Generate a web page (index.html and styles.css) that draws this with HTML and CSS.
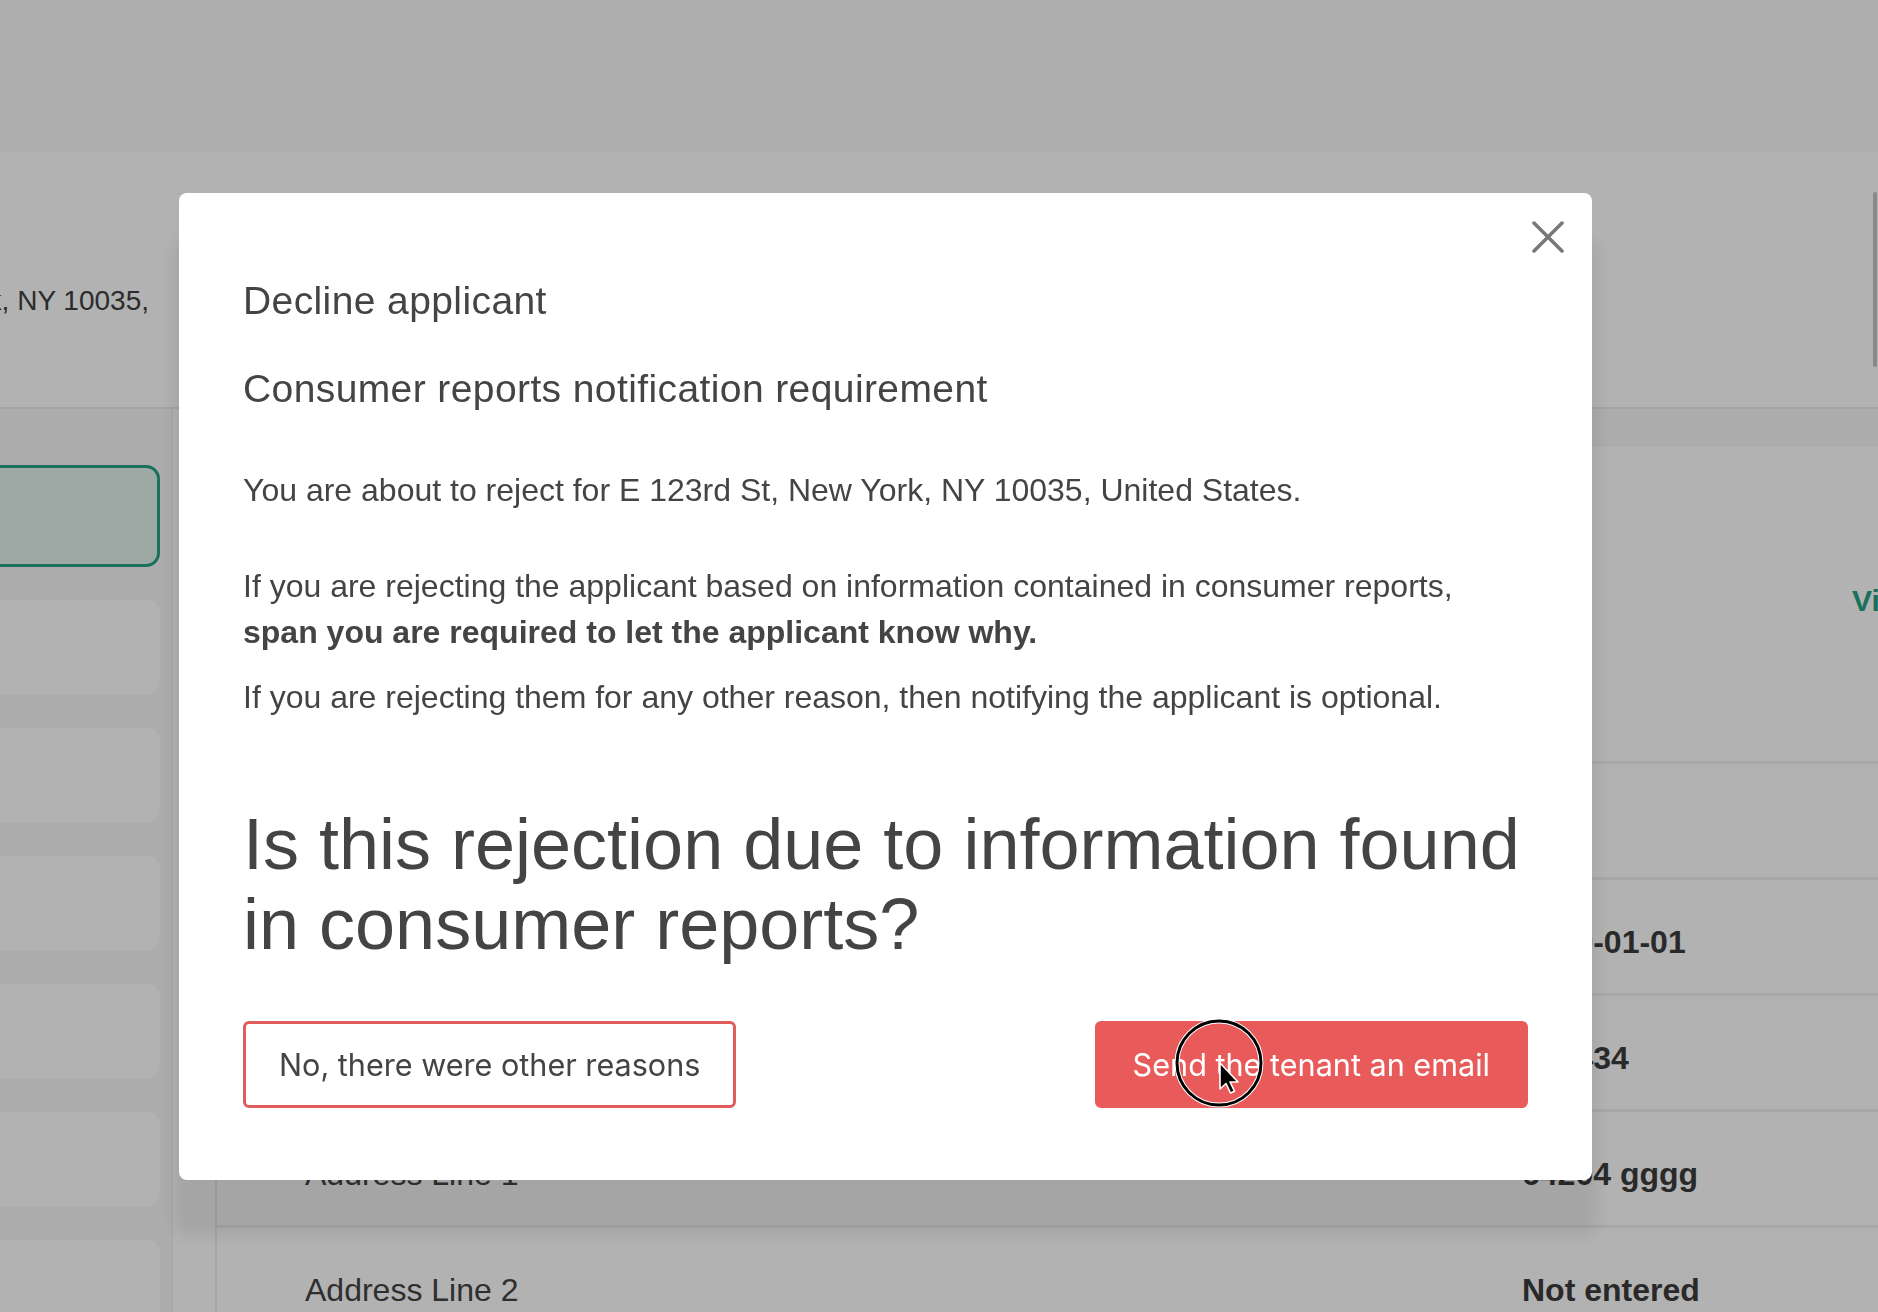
FILE: index.html
```html
<!DOCTYPE html>
<html lang="en">
<head>
    <meta charset="UTF-8">
    <meta name="viewport" content="width=device-width, initial-scale=1.0">
    <title>Decline applicant</title>
    <link rel="stylesheet" href="styles.css">
</head>
<body>
    <div class="topbar"></div>

    <div class="property-header">
        <div class="property-address">
            <span>E 123rd St, New York, NY 10035,</span>
        </div>
        <div class="header-scroll"></div>
    </div>

    <div class="page-body">
        <div class="applicant-list">
            <div class="applicant-card selected"></div>
            <div class="applicant-card"></div>
            <div class="applicant-card"></div>
            <div class="applicant-card"></div>
            <div class="applicant-card"></div>
            <div class="applicant-card"></div>
            <div class="applicant-card"></div>
        </div>

        <div class="applicant-details">
            <div class="details-header"></div>
            <div class="details-photo">
                <span></span>
                <a class="view-link" href="#">View documents</a>
            </div>
            <div class="details-row">
                <span class="row-label">First name</span>
                <span class="row-value">Ann</span>
            </div>
            <div class="details-row">
                <span class="row-label">Date of birth</span>
                <span class="row-value">1990-01-01</span>
            </div>
            <div class="details-row">
                <span class="row-label">Phone</span>
                <span class="row-value">123434</span>
            </div>
            <div class="details-row">
                <span class="row-label">Address Line 1</span>
                <span class="row-value">64204 gggg</span>
            </div>
            <div class="details-row">
                <span class="row-label">Address Line 2</span>
                <span class="row-value">Not entered</span>
            </div>
        </div>
    </div>

    <!-- Decline applicant modal -->
    <div class="modal-backdrop">
        <div class="modal">
            <button class="modal-close" aria-label="Close">
                <svg width="32" height="32" viewBox="0 0 32 32">
                    <path d="M2 2 L30 30 M30 2 L2 30" stroke="#777" stroke-width="3.5" stroke-linecap="round" fill="none"/>
                </svg>
            </button>

            <h2 class="modal-title">Decline applicant</h2>
            <h3 class="modal-subtitle">Consumer reports notification requirement</h3>

            <p class="intro">You are about to reject for E 123rd St, New York, NY 10035, United States.</p>
            <p class="notice">If you are rejecting the applicant based on information contained in consumer reports,<br><strong>span you are required to let the applicant know why.</strong></p>
            <p>If you are rejecting them for any other reason, then notifying the applicant is optional.</p>

            <h1 class="question">Is this rejection due to information found in consumer reports?</h1>

            <div class="modal-actions">
                <button class="btn btn-outline">No, there were other reasons</button>
                <button class="btn btn-danger">Send the tenant an email</button>
            </div>
        </div>

        <!-- click highlight from the screen recorder -->
        <svg class="click-marker" width="90" height="90" viewBox="0 0 90 90">
            <circle cx="44" cy="44" r="42" fill="none" stroke="#fff" stroke-width="5"/>
            <circle cx="44" cy="44" r="42" fill="none" stroke="#000" stroke-width="3"/>
            <path d="M45 44 L45 70 L51 64.5 L55.5 74 L59.5 72.2 L55 63 L63 63 Z" fill="#000" stroke="#fff" stroke-width="1.6" stroke-linejoin="round"/>
        </svg>
    </div>
</body>
</html>
```

FILE: styles.css
```css
* {
    box-sizing: border-box;
}

body {
    margin: 0;
    height: 1312px;
    overflow: hidden;
    font-family: "Liberation Sans", Arial, sans-serif;
    color: #444;
    background-color: #fff;
}

/* Page behind the modal */
.topbar {
    height: 152px;
    background-color: #f9f9f9;
}

.property-header {
    position: relative;
    height: 257px;
    border-bottom: 2px solid #ececec;
}

.property-address {
    display: flex;
    justify-content: flex-end;
    width: 172px;
    padding: 132px 23px 0 0;
    overflow: hidden;
    white-space: nowrap;
    font-size: 28px;
    line-height: 34px;
    color: #404040;
}

.header-scroll {
    position: absolute;
    top: 40px;
    right: 1px;
    width: 4px;
    height: 175px;
    border-radius: 2px;
    background-color: #c4c4c4;
}

.page-body {
    display: flex;
}

.applicant-list {
    width: 173px;
    height: 903px;
    padding: 56px 12px 0 0;
    display: flex;
    flex-direction: column;
    gap: 33px;
    background-color: #f6f6f6;
    border-right: 1px solid #ededed;
}

.applicant-card {
    flex-shrink: 0;
    height: 95px;
    background-color: #fff;
    border-radius: 0 14px 14px 0;
}

.applicant-card.selected {
    height: 102px;
    background-color: #e2f3ed;
    border: 3px solid #24a385;
    border-left: 0;
}

.applicant-details {
    flex: 1;
    margin-left: 42px;
    border-left: 2px solid #ececec;
    overflow: hidden;
}

.details-header {
    height: 38px;
    background-color: #f7f7f7;
}

.details-photo {
    display: grid;
    grid-template-columns: 1635px 1fr;
    align-items: center;
    height: 314px;
}

.view-link {
    padding-bottom: 6px;
    font-size: 30px;
    font-weight: bold;
    color: #24a184;
    text-decoration: none;
    white-space: nowrap;
}

.details-row {
    display: grid;
    grid-template-columns: 1305px 1fr;
    align-items: center;
    height: 116px;
    padding-top: 12px;
    border-top: 3px solid #efefef;
    font-size: 32px;
    white-space: nowrap;
}

.row-label {
    padding-left: 88px;
    color: #444;
}

.row-value {
    font-weight: bold;
    color: #3c3c3c;
}

/* Modal */
.modal-backdrop {
    position: fixed;
    top: 0;
    left: 0;
    width: 100%;
    height: 100%;
    background-color: rgba(0,0,0,0.3);
}

.modal {
    position: absolute;
    top: 193px;
    left: 179px;
    width: 1413px;
    padding: 85px 64px 72px;
    background-color: white;
    border-radius: 8px;
    box-shadow: 0 50px 16px 6px rgba(0,0,0,0.08);
}

.modal-close {
    position: absolute;
    top: 28px;
    right: 28px;
    width: 32px;
    height: 32px;
    padding: 0;
    border: none;
    background: none;
    cursor: pointer;
}

.modal-close svg {
    display: block;
}

.modal-title,
.modal-subtitle {
    margin: 0 0 41px;
    font-size: 39px;
    font-weight: normal;
    line-height: 1.2;
    letter-spacing: 0.4px;
}

.modal-subtitle {
    margin-bottom: 54px;
}

.modal p {
    margin: 0;
    font-size: 32px;
    line-height: 46px;
}

.modal p.intro {
    margin-bottom: 50px;
}

.modal p.notice {
    margin-bottom: 19px;
}

.question {
    margin: 84px 0 57px;
    font-size: 72px;
    font-weight: normal;
    line-height: 80px;
}

.modal-actions {
    display: flex;
    justify-content: space-between;
}

.btn {
    height: 87px;
    padding: 0 35px;
    border: 3px solid #e05c5c;
    border-radius: 6px;
    font-family: Inter, "Liberation Sans", sans-serif;
    font-size: 30.6px;
    cursor: pointer;
}

.btn-outline {
    padding: 0 33px;
    background-color: #fff;
    color: #444;
}

.btn-danger {
    background-color: #e95b5b;
    border-color: #e95b5b;
    color: #fff;
}

.click-marker {
    position: absolute;
    left: 1175px;
    top: 1019px;
    pointer-events: none;
}
```
